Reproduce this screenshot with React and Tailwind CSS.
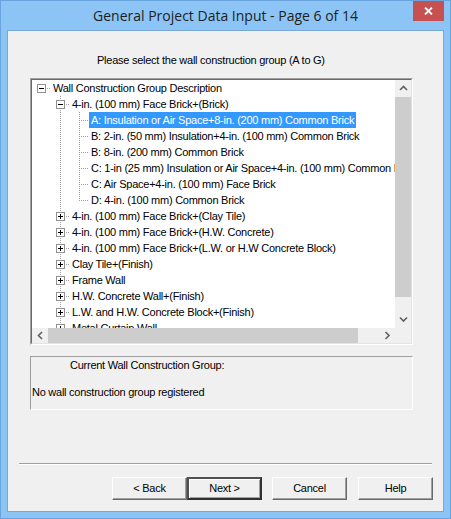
import React from 'react';

const rows = [
  { lvl: 0, btn: '-', text: 'Wall Construction Group Description' },
  { lvl: 1, btn: '-', text: '4-in. (100 mm) Face Brick+(Brick)' },
  { lvl: 2, text: 'A: Insulation or Air Space+8-in. (200 mm) Common Brick', sel: true },
  { lvl: 2, text: 'B: 2-in. (50 mm) Insulation+4-in. (100 mm) Common Brick' },
  { lvl: 2, text: 'B: 8-in. (200 mm) Common Brick' },
  { lvl: 2, text: 'C: 1-in (25 mm) Insulation or Air Space+4-in. (100 mm) Common Brick' },
  { lvl: 2, text: 'C: Air Space+4-in. (100 mm) Face Brick' },
  { lvl: 2, text: 'D: 4-in. (100 mm) Common Brick', last: true },
  { lvl: 1, btn: '+', text: '4-in. (100 mm) Face Brick+(Clay Tile)' },
  { lvl: 1, btn: '+', text: '4-in. (100 mm) Face Brick+(H.W. Concrete)' },
  { lvl: 1, btn: '+', text: '4-in. (100 mm) Face Brick+(L.W. or H.W Concrete Block)' },
  { lvl: 1, btn: '+', text: 'Clay Tile+(Finish)' },
  { lvl: 1, btn: '+', text: 'Frame Wall' },
  { lvl: 1, btn: '+', text: 'H.W. Concrete Wall+(Finish)' },
  { lvl: 1, btn: '+', text: 'L.W. and H.W. Concrete Block+(Finish)' },
  { lvl: 1, btn: '+', text: 'Metal Curtain Wall' },
];

// one 19x16 indent cell of the tree: dotted connectors and the +/- box
function Cell({ vert, horiz, btn }) {
  const dots = [];
  if (vert) {
    const end = vert === 'top' ? 9 : 16;
    for (let y = 0; y < end; y += 2) dots.push(<rect key={'v' + y} x="9" y={y} width="1" height="1" fill="#a0a0a0" />);
  }
  if (horiz) {
    for (let x = 11; x < 19; x += 2) dots.push(<rect key={'h' + x} x={x} y="8" width="1" height="1" fill="#a0a0a0" />);
  }
  return (
    <svg width="19" height="16" className="shrink-0">
      {dots}
      {btn && (
        <g>
          <rect x="5.5" y="4.5" width="8" height="8" fill="#fff" stroke="#919191" />
          <rect x="7" y="8" width="5" height="1" fill="#000" />
          {btn === '+' && <rect x="9" y="6" width="1" height="5" fill="#000" />}
        </g>
      )}
    </svg>
  );
}

function TreeRow({ row }) {
  const cells = [];
  if (row.lvl === 0) {
    cells.push(<Cell key="0" horiz btn={row.btn} />);
  } else if (row.lvl === 1) {
    cells.push(<Cell key="0" />);
    cells.push(<Cell key="1" vert="full" horiz btn={row.btn} />);
  } else {
    cells.push(<Cell key="0" />);
    cells.push(<Cell key="1" vert="full" />);
    cells.push(<Cell key="2" vert={row.last ? 'top' : 'full'} horiz />);
  }
  return (
    <div className="flex h-4 items-center whitespace-nowrap">
      {cells}
      <span
        className={
          row.sel
            ? 'h-4 border border-dotted border-[#c8761c] bg-[#3399ff] pl-px pr-px leading-[14px] text-white'
            : 'h-4 border border-transparent pl-px pr-px leading-[14px] text-black'
        }
      >
        {row.text}
      </span>
    </div>
  );
}

function Chevron({ dir }) {
  const d = {
    up: 'M1 5 L4.5 1.5 L8 5',
    down: 'M1 1.5 L4.5 5 L8 1.5',
    left: 'M5 1 L1.5 4.5 L5 8',
    right: 'M1.5 1 L5 4.5 L1.5 8',
  }[dir];
  const vert = dir === 'up' || dir === 'down';
  return (
    <svg width={vert ? 9 : 7} height={vert ? 7 : 9}>
      <path d={d} fill="none" stroke="#606060" strokeWidth="1.6" />
    </svg>
  );
}

function WinButton({ children, isDefault }) {
  return (
    <button
      className={
        isDefault
          ? 'flex h-[23px] w-[75px] items-center justify-center border-2 border-t-[#505050] border-l-[#505050] border-r-[#303030] border-b-[#303030] bg-[#f0f0f0] text-[11px] tracking-[-0.25px] text-black shadow-[inset_1px_1px_0_#fff,inset_-1px_-1px_0_#a0a0a0]'
          : 'flex h-[23px] w-[75px] items-center justify-center border border-t-white border-l-white border-r-[#696969] border-b-[#696969] bg-[#f0f0f0] text-[11px] tracking-[-0.25px] text-black shadow-[inset_-1px_-1px_0_#a0a0a0]'
      }
    >
      {children}
    </button>
  );
}

export default function App() {
  return (
    <div className="relative flex h-[519px] w-[451px] flex-col border border-[#6aa4dc] bg-[#8cc4f5] font-['Liberation_Sans',Arial,sans-serif]">
      {/* title bar */}
      <div className="relative flex h-[29px] shrink-0 items-center justify-center">
        <span className="font-['Open_Sans','Noto_Sans',sans-serif] text-[14px] text-[#1e1e1e]">
          General Project Data Input - Page 6 of 14
        </span>
        <div className="absolute right-[6px] top-0 flex h-5 w-[31px] items-center justify-center bg-[#c75050]">
          <svg width="9" height="8">
            <path d="M1 0.5 L8 7.5 M8 0.5 L1 7.5" stroke="#fff" strokeWidth="1.8" />
          </svg>
        </div>
      </div>

      {/* dialog body */}
      <div className="ml-[6px] h-[482px] w-[437px] border border-[#7aa8d6] bg-[#f0f0f0] text-[11px] tracking-[-0.25px]">
        <div className="pl-[89px] pt-[21px] leading-4 text-black">
          Please select the wall construction group (A to G)
        </div>

        {/* tree view */}
        <div className="ml-[22px] mt-[10px] w-[383px] border border-t-[#a0a0a0] border-l-[#a0a0a0] border-r-white border-b-white">
          <div className="border border-t-[#696969] border-l-[#696969] border-r-[#e3e3e3] border-b-[#e3e3e3]">
            <div className="flex">
              <div className="h-[248px] w-[363px] overflow-hidden bg-white">
                {rows.map((r, i) => (
                  <TreeRow key={i} row={r} />
                ))}
              </div>
              <div className="flex h-[248px] w-4 flex-col bg-[#f0f0f0]">
                <div className="flex h-[17px] items-center justify-center">
                  <Chevron dir="up" />
                </div>
                <div className="h-[200px] bg-[#cdcdcd]" />
                <div className="flex-1" />
                <div className="flex h-[17px] items-center justify-center">
                  <Chevron dir="down" />
                </div>
              </div>
            </div>
            <div className="flex h-[15px]">
              <div className="flex w-[363px] bg-[#f0f0f0]">
                <div className="flex w-4 items-center justify-center">
                  <Chevron dir="left" />
                </div>
                <div className="w-[310px] bg-[#cdcdcd]" />
                <div className="flex-1" />
                <div className="flex w-4 items-center justify-center">
                  <Chevron dir="right" />
                </div>
              </div>
              <div className="w-4 bg-[#f0f0f0]" />
            </div>
          </div>
        </div>

        {/* current group */}
        <div className="ml-[22px] mt-[11px] h-[54px] w-[383px] border border-t-[#a0a0a0] border-l-[#a0a0a0] border-r-white border-b-white">
          <div className="pl-[39px] leading-4 text-black">Current Wall Construction Group:</div>
          <div className="mt-[11px] pl-px leading-4 text-black">No wall construction group registered</div>
        </div>

        {/* separator */}
        <div className="ml-[11px] mt-[53px] w-[413px] border-t border-b border-t-[#a0a0a0] border-b-white" />

        {/* buttons */}
        <div className="mt-[12px] flex pl-[104px]">
          <WinButton>&lt; Back</WinButton>
          <WinButton isDefault>Next &gt;</WinButton>
          <div className="w-[10px]" />
          <WinButton>Cancel</WinButton>
          <div className="w-[11px]" />
          <WinButton>Help</WinButton>
        </div>
      </div>
    </div>
  );
}
